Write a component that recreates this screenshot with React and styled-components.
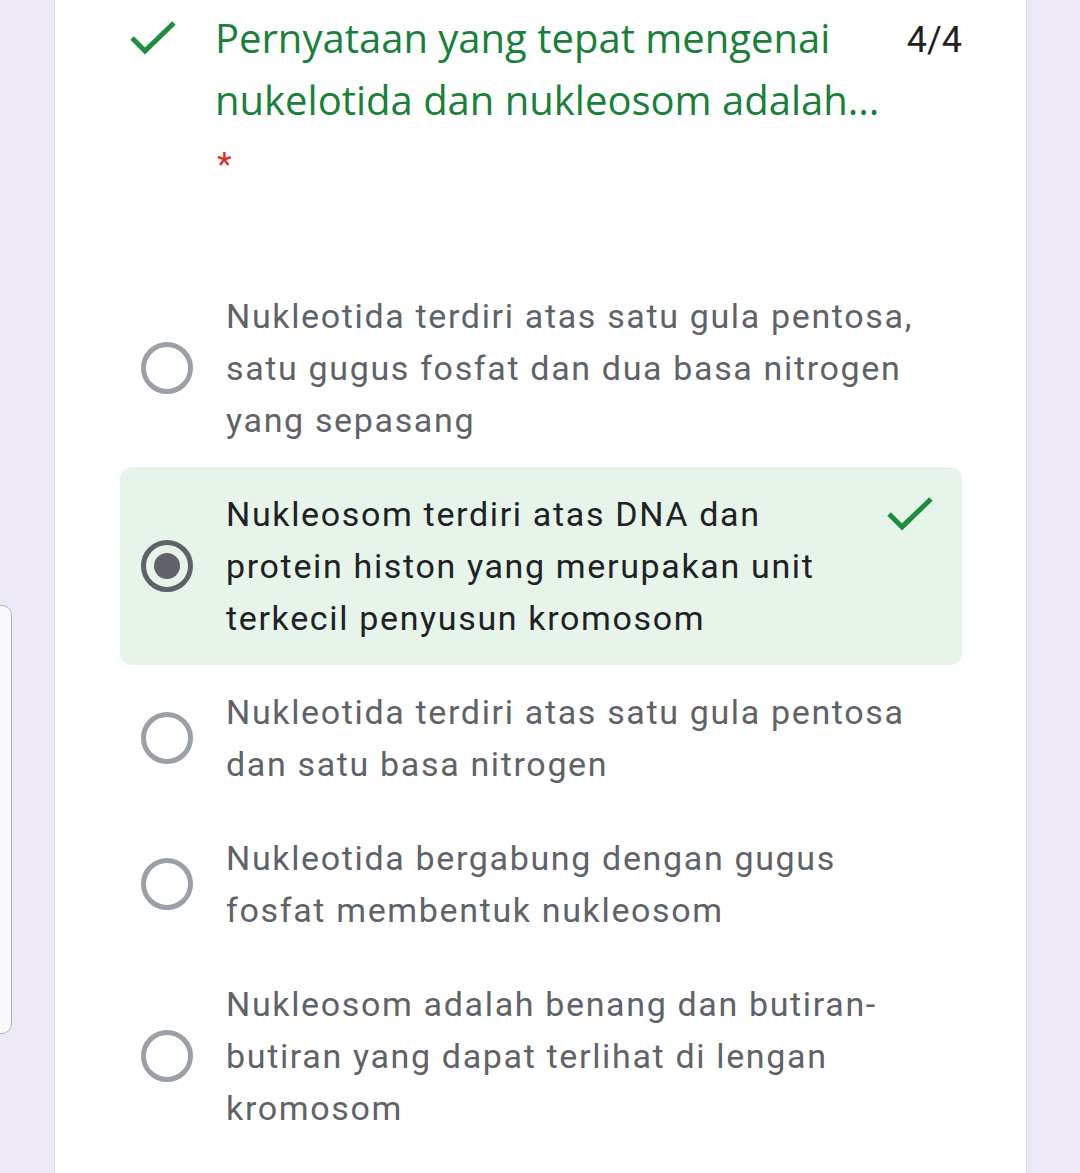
import React from "react";
import styled, { createGlobalStyle } from "styled-components";

const Global = createGlobalStyle`
  html, body {
    margin: 0;
    padding: 0;
    background: #ede9f7;
    font-family: Roboto, "Liberation Sans", sans-serif;
  }
`;

const Page = styled.div`
  position: relative;
  width: 1080px;
  height: 1173px;
  overflow: hidden;
  background: #ede9f7;
`;

const Card = styled.div`
  margin-left: 54px;
  width: 973px;
  height: 100%;
  background: #fff;
  border-left: 1px solid #dadce0;
  border-right: 1px solid #dadce0;
  box-sizing: border-box;
  padding: 7px 64px 0 65px;
`;

const Header = styled.div`
  display: flex;
  align-items: flex-start;
`;

const HeadIcon = styled.div`
  width: 95px;
  height: 62px;
  display: flex;
  align-items: center;
  padding-left: 10px;
  box-sizing: border-box;
`;

const TitleBlock = styled.div`
  flex: 1;
  min-width: 0;
`;

const Title = styled.div`
  font-family: "Open Sans", Roboto, sans-serif;
  font-size: 40px;
  line-height: 62px;
  color: #188038;
`;

const Required = styled.div`
  color: #d93025;
  font-size: 34px;
  line-height: 62px;
  margin-top: 2px;
  padding-left: 2px;
`;

const Score = styled.div`
  flex: none;
  font-size: 36px;
  line-height: 62px;
  color: #202124;
  padding-top: 2px;
  margin-left: 18px;
`;

const Options = styled.div`
  margin-top: 74px;
`;

const Option = styled.div`
  display: flex;
  align-items: center;
  padding: 21px 29px 21px 21px;
  border-radius: 12px;
  background: ${(p) => (p.$correct ? "#e6f4ea" : "transparent")};
`;

const Radio = styled.span`
  flex: none;
  width: 52px;
  height: 52px;
  border-radius: 50%;
  box-sizing: border-box;
  border: 5px solid ${(p) => (p.$checked ? "#5f6368" : "#9aa0a6")};
  display: flex;
  align-items: center;
  justify-content: center;
  &::after {
    content: "";
    display: ${(p) => (p.$checked ? "block" : "none")};
    width: 26px;
    height: 26px;
    border-radius: 50%;
    background: #5f6368;
  }
`;

const Label = styled.div`
  flex: 1;
  max-width: ${(p) => (p.$checked ? "640px" : "none")};
  margin-left: 33px;
  font-size: 34px;
  line-height: 52px;
  letter-spacing: 1.65px;
  color: ${(p) => (p.$checked ? "#202124" : "#5f6368")};
`;

const Mark = styled.div`
  align-self: flex-start;
  margin-left: auto;
  width: 52px;
  height: 52px;
  display: flex;
  align-items: center;
  justify-content: flex-end;
`;

const SideTab = styled.div`
  position: absolute;
  left: -20px;
  top: 605px;
  width: 30px;
  height: 427px;
  border: 1.5px solid #b4b4b8;
  border-radius: 10px;
  background: #f9f8fd;
`;

function Check({ size = 46 }) {
  return (
    <svg width={size} height={size * 0.78} viewBox="0 0 46 36">
      <path d="M2 18 L15 31 L44 3" fill="none" stroke="#1e8e3e" strokeWidth="5" />
    </svg>
  );
}

const options = [
  { text: "Nukleotida terdiri atas satu gula pentosa, satu gugus fosfat dan dua basa nitrogen yang sepasang" },
  { text: "Nukleosom terdiri atas DNA dan protein histon yang merupakan unit terkecil penyusun kromosom", checked: true },
  { text: "Nukleotida terdiri atas satu gula pentosa dan satu basa nitrogen" },
  { text: "Nukleotida bergabung dengan gugus fosfat membentuk nukleosom" },
  { text: "Nukleosom adalah benang dan butiran-butiran yang dapat terlihat di lengan kromosom" },
];

export default function App() {
  return (
    <Page>
      <Global />
      <Card>
        <Header>
          <HeadIcon>
            <Check size={46} />
          </HeadIcon>
          <TitleBlock>
            <Title>Pernyataan yang tepat mengenai nukelotida dan nukleosom adalah...</Title>
            <Required>*</Required>
          </TitleBlock>
          <Score>4/4</Score>
        </Header>
        <Options>
          {options.map((o, i) => (
            <Option key={i} $correct={o.checked}>
              <Radio $checked={o.checked} />
              <Label $checked={o.checked}>{o.text}</Label>
              {o.checked && (
                <Mark>
                  <Check size={46} />
                </Mark>
              )}
            </Option>
          ))}
        </Options>
      </Card>
      <SideTab />
    </Page>
  );
}
